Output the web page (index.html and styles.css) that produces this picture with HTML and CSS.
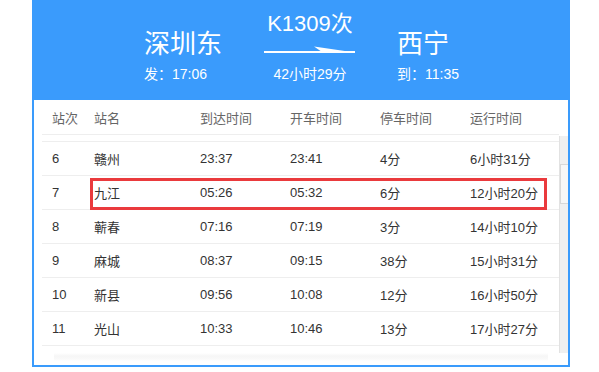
FILE: index.html
```html
<!DOCTYPE html>
<html lang="zh">
<head>
<meta charset="utf-8">
<link rel="stylesheet" href="styles.css">
</head>
<body>
<div class="frame">
  <div class="head">
    <div class="st from">
      <div class="name">深圳东</div>
      <div class="time">发：17:06</div>
    </div>
    <div class="train">
      <div class="code">K1309次</div>
      <svg class="arrow" width="92" height="10" viewBox="0 0 92 10">
        <rect x="0" y="5" width="91" height="2" fill="#fff"/>
        <polygon points="50,0.5 91,6.5 91,7 58,6" fill="#fff"/>
      </svg>
      <div class="dur">42小时29分</div>
    </div>
    <div class="st to">
      <div class="name">西宁</div>
      <div class="time">到：11:35</div>
    </div>
  </div>
  <div class="panel">
    <div class="thead row">
      <span>站次</span><span>站名</span><span>到达时间</span><span>开车时间</span><span>停车时间</span><span>运行时间</span>
    </div>
    <div class="bodywrap">
      <div class="rows">
        <div class="strip"></div>
        <div class="row"><span>6</span><span>赣州</span><span>23:37</span><span>23:41</span><span>4分</span><span>6小时31分</span></div>
        <div class="row"><span>7</span><span>九江</span><span>05:26</span><span>05:32</span><span>6分</span><span>12小时20分</span></div>
        <div class="row"><span>8</span><span>蕲春</span><span>07:16</span><span>07:19</span><span>3分</span><span>14小时10分</span></div>
        <div class="row"><span>9</span><span>麻城</span><span>08:37</span><span>09:15</span><span>38分</span><span>15小时31分</span></div>
        <div class="row"><span>10</span><span>新县</span><span>09:56</span><span>10:08</span><span>12分</span><span>16小时50分</span></div>
        <div class="row"><span>11</span><span>光山</span><span>10:33</span><span>10:46</span><span>13分</span><span>17小时27分</span></div>
      </div>
      <div class="vbar"><div class="thumb"></div></div>
    </div>
    <div class="hbar"></div>
    <div class="mark"></div>
  </div>
</div>
</body>
</html>
```
FILE: styles.css
```css
html, body {
  margin: 0;
  padding: 0;
  background: #fff;
}
body {
  font-family: "Liberation Sans", "Noto Sans CJK SC", sans-serif;
  color: #333;
}
.frame {
  margin-left: 32px;
  width: 538px;
}
.head {
  background: #3a9bfc;
  height: 100px;
  display: flex;
  padding-left: 112px;
  color: #fff;
  box-sizing: border-box;
}
.st {
  padding-top: 29px;
}
.st .name {
  font-size: 26px;
  line-height: 30px;
  white-space: nowrap;
}
.st .time {
  font-size: 14px;
  line-height: 18px;
  margin-top: 6px;
  white-space: nowrap;
}
.from {
  width: 120px;
}
.train {
  width: 133px;
  padding-top: 11px;
}
.train .code,
.train .dur {
  width: 92px;
  text-align: center;
  white-space: nowrap;
}
.train .code {
  font-size: 22px;
  line-height: 26px;
}
.arrow {
  display: block;
  margin-top: 9px;
}
.train .dur {
  font-size: 14px;
  line-height: 18px;
  margin-top: 9px;
}
.panel {
  position: relative;
  height: 267px;
  border: 2px solid #3a9bfc;
  border-top: 0;
  box-sizing: border-box;
}
.row {
  display: grid;
  grid-template-columns: 42px 106px 90px 90px 90px 1fr;
  align-items: center;
  height: 33px;
  padding-left: 10px;
  border-bottom: 1px solid #eeeeee;
  font-size: 13px;
  white-space: nowrap;
}
.thead {
  height: 34px;
  margin-left: 8px;
  margin-right: 9px;
  color: #666;
}
.bodywrap {
  display: flex;
  margin-top: 1px;
  height: 217px;
}
.rows {
  flex: 1;
  padding-left: 8px;
  overflow: hidden;
}
.strip {
  height: 5px;
  border-bottom: 1px solid #eeeeee;
}
.vbar {
  width: 8px;
  background: #f0f0f0;
  border-left: 1px solid #e2e2e2;
}
.thumb {
  margin-top: 28px;
  height: 38px;
  background: #f7f7f7;
  border: 1px solid #d8d8d8;
  border-right: 0;
}
.hbar {
  height: 12px;
  background: linear-gradient(to bottom, #fff 0, #f6f6f6 3px, #f9f9f9 6px, #fff 8px);
  margin-left: 20px;
  margin-right: 20px;
}
.mark {
  position: absolute;
  left: 56px;
  top: 78px;
  width: 457px;
  height: 32px;
  border: 3px solid #ea3a3d;
  box-sizing: border-box;
}
```
